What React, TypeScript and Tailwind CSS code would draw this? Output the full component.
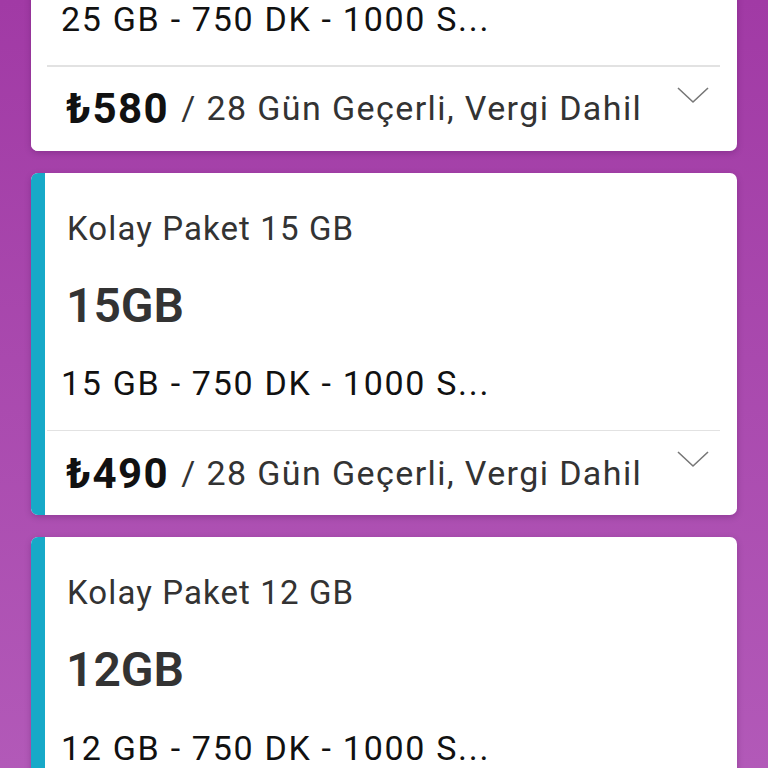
type Plan = {
  gb: number;
  price: number;
  stripe: boolean;
};

const plans: Plan[] = [
  { gb: 25, price: 580, stripe: false },
  { gb: 15, price: 490, stripe: true },
  { gb: 12, price: 430, stripe: true },
];

function Chevron() {
  return (
    <svg width="32" height="16" viewBox="0 0 32 16" className="mt-[20px] shrink-0">
      <polyline points="1,1 16,15 31,1" fill="none" stroke="#777" strokeWidth="1.6" strokeLinejoin="round" />
    </svg>
  );
}

function PlanCard({ plan }: { plan: Plan }) {
  return (
    <div className="flex overflow-hidden rounded-[7px] bg-white shadow-[0_2px_6px_rgba(60,0,70,0.25)]">
      <div className={plan.stripe ? 'w-[14px] shrink-0 bg-[#17a9c8]' : 'w-[14px] shrink-0 bg-white'} />
      <div className="flex min-w-0 flex-1 flex-col pt-[35px]">
        <div className="flex h-[42px] items-center pl-[22px] text-[33px] tracking-[1.1px] text-[#333]">
          Kolay Paket {plan.gb} GB
        </div>
        <div className="mt-[28px] flex h-[56px] items-center pl-[21px] text-[48px] font-semibold text-[#333]">
          {plan.gb}GB
        </div>
        <div className="mt-[30px] flex h-[40px] items-center pl-[16px] text-[34px] tracking-[1.7px] whitespace-nowrap text-[#111]">
          {plan.gb} GB - 750 DK - 1000 S...
        </div>
        <div className="mt-[26px] mr-[17px] ml-[2px] h-[1.5px] bg-[#e2e2e2]" />
        <div className="flex h-[84px] items-start justify-between pr-[28px] pl-[21px]">
          <div className="flex h-full items-center gap-[12px] whitespace-nowrap">
            <span className="text-[42px] font-bold tracking-[1.5px] text-[#111]">₺{plan.price}</span>
            <span className="text-[34px] tracking-[1.4px] text-[#333]">/ 28 Gün Geçerli, Vergi Dahil</span>
          </div>
          <Chevron />
        </div>
      </div>
    </div>
  );
}

export default function App() {
  return (
    <div
      className="h-[768px] overflow-hidden bg-gradient-to-b from-[#a13aa5] to-[#b259b8] px-[31px]"
      style={{ fontFamily: 'Roboto, "Noto Sans", sans-serif' }}
    >
      <div className="mt-[-192px] flex flex-col gap-[22px]">
        {plans.map((p) => (
          <PlanCard key={p.gb} plan={p} />
        ))}
      </div>
    </div>
  );
}
